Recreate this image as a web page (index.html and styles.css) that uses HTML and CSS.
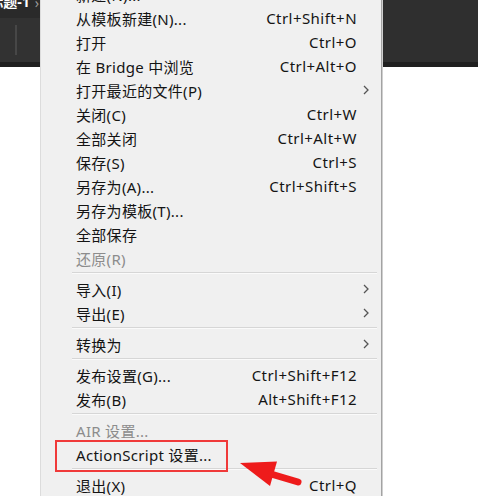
FILE: index.html
```html
<!DOCTYPE html>
<html lang="zh-CN">
<head>
  <meta charset="UTF-8">
  <title>文件菜单</title>
  <link rel="stylesheet" href="styles.css">
</head>
<body>
  <div class="app">
    <!-- 左侧文档标签栏 -->
    <div class="dock">
      <div class="tab">
        <span class="tab-title">无标题-1</span>
        <span class="tab-more">›</span>
      </div>
      <div class="tools"><i class="tool-sep"></i></div>
      <div class="dock-edge"></div>
    </div>

    <!-- 文件菜单 -->
    <div class="menu">
      <ul class="menu-list">
        <li class="item"><span class="label">新建(N)...</span><span class="key">Ctrl+N</span><span class="sub"></span></li>
        <li class="item"><span class="label">从模板新建(N)...</span><span class="key">Ctrl+Shift+N</span><span class="sub"></span></li>
        <li class="item"><span class="label">打开</span><span class="key">Ctrl+O</span><span class="sub"></span></li>
        <li class="item"><span class="label">在 Bridge 中浏览</span><span class="key">Ctrl+Alt+O</span><span class="sub"></span></li>
        <li class="item"><span class="label">打开最近的文件(P)</span><span class="key"></span><span class="sub"><svg width="6" height="10" viewBox="0 0 6 10"><path d="M1 1l4 4-4 4" /></svg></span></li>
        <li class="item"><span class="label">关闭(C)</span><span class="key">Ctrl+W</span><span class="sub"></span></li>
        <li class="item"><span class="label">全部关闭</span><span class="key">Ctrl+Alt+W</span><span class="sub"></span></li>
        <li class="item"><span class="label">保存(S)</span><span class="key">Ctrl+S</span><span class="sub"></span></li>
        <li class="item"><span class="label">另存为(A)...</span><span class="key">Ctrl+Shift+S</span><span class="sub"></span></li>
        <li class="item"><span class="label">另存为模板(T)...</span><span class="key"></span><span class="sub"></span></li>
        <li class="item"><span class="label">全部保存</span><span class="key"></span><span class="sub"></span></li>
        <li class="item disabled"><span class="label">还原(R)</span><span class="key"></span><span class="sub"></span></li>
        <li class="sep"></li>
        <li class="item"><span class="label">导入(I)</span><span class="key"></span><span class="sub"><svg width="6" height="10" viewBox="0 0 6 10"><path d="M1 1l4 4-4 4" /></svg></span></li>
        <li class="item"><span class="label">导出(E)</span><span class="key"></span><span class="sub"><svg width="6" height="10" viewBox="0 0 6 10"><path d="M1 1l4 4-4 4" /></svg></span></li>
        <li class="sep"></li>
        <li class="item"><span class="label">转换为</span><span class="key"></span><span class="sub"><svg width="6" height="10" viewBox="0 0 6 10"><path d="M1 1l4 4-4 4" /></svg></span></li>
        <li class="sep"></li>
        <li class="item"><span class="label">发布设置(G)...</span><span class="key">Ctrl+Shift+F12</span><span class="sub"></span></li>
        <li class="item"><span class="label">发布(B)</span><span class="key">Alt+Shift+F12</span><span class="sub"></span></li>
        <li class="sep"></li>
        <li class="item disabled"><span class="label">AIR 设置...</span><span class="key"></span><span class="sub"></span></li>
        <li class="item marked"><span class="label">ActionScript 设置...</span><span class="key"></span><span class="sub"></span><i class="mark-box"></i></li>
        <li class="sep"></li>
        <li class="item"><span class="label">退出(X)</span><span class="key">Ctrl+Q</span><span class="sub"></span></li>
      </ul>
    </div>

    <!-- 右侧工作区 -->
    <div class="dock dock-right">
      <div class="tools"></div>
      <div class="dock-edge"></div>
    </div>

    <!-- 红色标注箭头 -->
    <svg class="red-arrow" width="66" height="34" viewBox="0 0 66 34">
      <path d="M2 7 L39 5.5 L32 30 Z" fill="#ee1b1b" />
      <path d="M33 18 L60 26" stroke="#ee1b1b" stroke-width="7" stroke-linecap="round" />
    </svg>
  </div>
</body>
</html>
```

FILE: styles.css
```css
body {
  margin: 0;
  background-color: #ffffff;
  font-family: "Noto Sans", "Noto Sans CJK SC", sans-serif;
  overflow: hidden;
}

.app {
  position: relative;
  display: grid;
  grid-template-columns: 40px 342px 1fr;
  height: 496px;
  overflow: hidden;
}

/* 顶部深色区域 */
.dock {
  display: flex;
  flex-direction: column;
  height: 67px;
}

.tab {
  display: flex;
  justify-content: flex-end;
  align-items: flex-start;
  height: 18px;
  overflow: hidden;
  background-color: #2a2a2a;
  white-space: nowrap;
}

.tab-title {
  color: #ffffff;
  font-weight: bold;
  font-size: 14px;
  line-height: 14px;
  margin-top: -5px;
}

.tab-more {
  color: #9a9a9a;
  font-size: 14px;
  line-height: 14px;
  margin-top: -4px;
  margin-left: 5px;
  padding-right: 1px;
}

.tools {
  flex: 1;
  background-color: #323232;
  padding: 7px 0 0 15px;
}

.tool-sep {
  display: block;
  width: 2px;
  height: 30px;
  background-color: #474747;
}

.dock-edge {
  height: 5px;
  background-color: #1f1f1f;
}

.dock-right .tools {
  background-color: #2f2f2f;
  padding: 0;
}

/* 菜单 */
.menu {
  background-color: #f0f0f0;
  border-left: 1px solid #dcdcdc;
  border-right: 1px solid #a3a3a3;
  box-shadow: 1px 0 0 #cfcfcf;
  box-sizing: border-box;
  height: 496px;
  overflow: hidden;
  position: relative;
  z-index: 1;
}

.menu-list {
  list-style: none;
  margin: -18px 0 0;
  padding: 0;
}

.item {
  position: relative;
  display: flex;
  align-items: center;
  height: 24px;
  padding-left: 35px;
  font-size: 15px;
  color: #141414;
  white-space: nowrap;
}

.item .label {
  letter-spacing: 0.3px;
}

.item .key {
  margin-left: auto;
  letter-spacing: 0.45px;
}

.item .sub {
  width: 24px;
  padding-left: 6px;
  box-sizing: border-box;
  display: flex;
  align-items: center;
}

.sub svg path {
  fill: none;
  stroke: #555555;
  stroke-width: 1.3;
}

.disabled {
  color: #8c8c8c;
}

.sep {
  height: 1px;
  margin: 2px 4px 4px 31px;
  background-color: #d6d6d6;
  box-shadow: 0 1px 0 #fafafa;
}

/* 红色标注框 */
.mark-box {
  position: absolute;
  left: 14px;
  top: -2px;
  width: 173px;
  height: 32px;
  box-sizing: border-box;
  border: 2px solid #f03a3a;
}

.red-arrow {
  position: absolute;
  left: 238px;
  top: 456px;
  z-index: 2;
}
```
